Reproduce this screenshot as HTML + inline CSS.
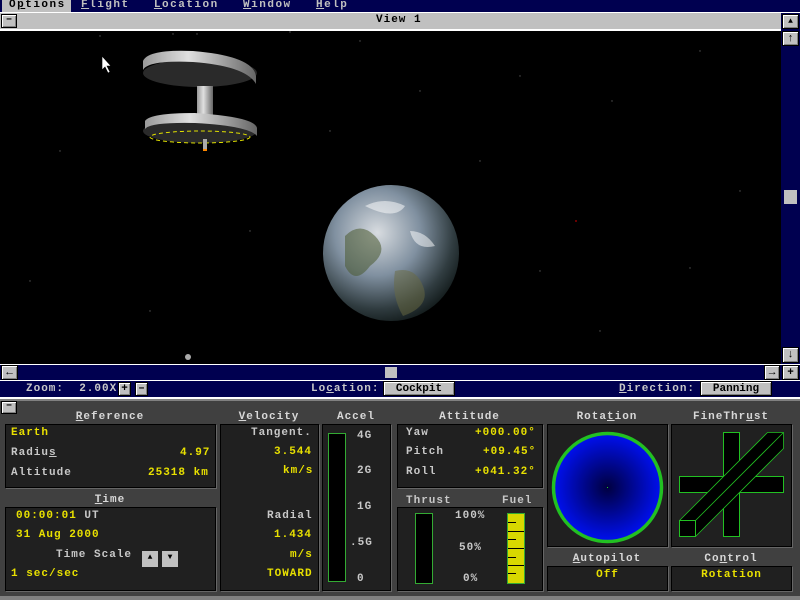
<!DOCTYPE html><html><head><style>
*{margin:0;padding:0;box-sizing:border-box}
body{width:800px;height:600px;overflow:hidden;background:#404040;font-family:"Liberation Mono",monospace;font-weight:bold;font-size:11px;position:relative}
.a{position:absolute}
.nv{background:#000050}
.btn{position:absolute;background:#c0c0c0;border:1px solid #000;box-shadow:inset 1px 1px #fff,inset -1px -1px #808080;color:#000;text-align:center;line-height:14px}
.box{position:absolute;background:#202020;border:1px solid #000;box-shadow:1px 1px #666}
.lbl{position:absolute;color:#d8d8d8;text-align:center;letter-spacing:1px}
.y{color:#e8e000}.g{color:#c8c8c8}
.t{position:absolute;letter-spacing:1px;white-space:nowrap}
u{text-decoration:underline}
</style></head><body>
<div class="a nv" style="left:0;top:0;width:800px;height:12px"></div>
<div class="a" style="left:2px;top:0;width:69px;height:12px;background:#c0c0c0"></div>
<div class="t" style="left:9px;top:-1px;color:#000;letter-spacing:1.5px">O<span style="text-decoration:underline">p</span>tions</div>
<div class="t" style="left:81px;top:-1px;color:#c0c0c0;letter-spacing:1.5px"><u>F</u>light&nbsp;&nbsp;&nbsp;<u>L</u>ocation&nbsp;&nbsp;&nbsp;<u>W</u>indow&nbsp;&nbsp;&nbsp;<u>H</u>elp</div>
<div class="a" style="left:0;top:12px;width:800px;height:1px;background:#fff"></div>
<div class="a" style="left:0;top:13px;width:781px;height:16px;background:#c0c0c0"></div>
<div class="btn" style="left:1px;top:14px;width:16px;height:14px;line-height:10px">&#8211;</div>
<div class="t" style="left:376px;top:14px;color:#000">View 1</div>
<div class="a nv" style="left:781px;top:13px;width:19px;height:352px"></div>
<div class="btn" style="left:782px;top:14px;width:17px;height:15px;font-size:8px">&#9650;</div>
<div class="a" style="left:0;top:29px;width:781px;height:2px;background:#fff"></div>
<div class="a" style="left:0;top:31px;width:781px;height:334px;background:#000;overflow:hidden">
<svg width="781" height="334">
<g fill="#555"><circle cx="100" cy="5" r=".7"/><circle cx="173" cy="3" r=".7"/><circle cx="197" cy="3" r=".7"/><circle cx="290" cy="1" r=".7"/><circle cx="360" cy="10" r=".7"/><circle cx="520" cy="45" r=".7"/><circle cx="612" cy="70" r=".7"/><circle cx="690" cy="237" r=".7"/><circle cx="700" cy="20" r=".7"/><circle cx="60" cy="120" r=".7"/><circle cx="30" cy="250" r=".7"/><circle cx="250" cy="200" r=".7"/><circle cx="480" cy="130" r=".7"/><circle cx="600" cy="300" r=".7"/><circle cx="740" cy="160" r=".7"/><circle cx="150" cy="280" r=".7"/><circle cx="540" cy="240" r=".7"/><circle cx="420" cy="60" r=".7"/><circle cx="330" cy="100" r=".7"/></g>
<circle cx="576" cy="190" r="1" fill="#800"/>
<defs><radialGradient id="e" cx="40%" cy="35%" r="70%"><stop offset="0" stop-color="#d8dce0"/><stop offset=".45" stop-color="#8090a0"/><stop offset=".8" stop-color="#303c40"/><stop offset="1" stop-color="#101818"/></radialGradient>
<linearGradient id="s" x1="0" x2="1"><stop offset="0" stop-color="#999"/><stop offset=".4" stop-color="#e0e0e0"/><stop offset="1" stop-color="#666"/></linearGradient></defs>
<circle cx="391" cy="222" r="68" fill="url(#e)"/>
<path d="M345 205q15-15 30 0t-5 30q-15 20-25 0z" fill="#4a5a30" opacity=".55"/>
<path d="M395 240q20-5 28 15t-20 30q-12-20-8-45z" fill="#6a6a40" opacity=".5"/>
<path d="M365 175q20-10 40 0q-10 15-40 0zM410 200q15 0 25 15q-20 5-25-15z" fill="#fff" opacity=".5"/>
<ellipse cx="200" cy="42" rx="57" ry="14" fill="#2a2a2a"/>
<path d="M143 30q5-12 50-10q60 5 63 25l0 8q-10-18-63-22q-45-2-50 8z" fill="url(#s)"/>
<rect x="197" y="55" width="16" height="40" fill="url(#s)"/>
<ellipse cx="200" cy="100" rx="57" ry="12" fill="#2a2a2a"/>
<path d="M145 90q5-8 50-8q60 4 62 15l0 8q-8-10-62-13q-45-1-50 6z" fill="url(#s)"/>
<ellipse cx="200" cy="106" rx="50" ry="6" fill="none" stroke="#e0e000" stroke-dasharray="4 3"/>
<rect x="203" y="108" width="4" height="10" fill="#aaa"/><rect x="203" y="118" width="4" height="2" fill="#f80"/>
<path d="M102 25l0 14l3-3l3 6l2-1l-3-6l4 0z" fill="#fff" stroke="#000" stroke-width=".6"/>
<circle cx="188" cy="326" r="3" fill="#aaa"/>
</svg></div>
<div class="btn" style="left:782px;top:31px;width:17px;height:15px">&#8593;</div>
<div class="a" style="left:784px;top:190px;width:13px;height:14px;background:#c0c0c0"></div>
<div class="btn" style="left:782px;top:347px;width:17px;height:16px">&#8595;</div>
<div class="a" style="left:0;top:364px;width:800px;height:1px;background:#fff"></div>
<div class="a nv" style="left:0;top:365px;width:800px;height:15px"></div>
<div class="btn" style="left:1px;top:365px;width:17px;height:15px">&#8592;</div>
<div class="a" style="left:385px;top:367px;width:12px;height:11px;background:#c0c0c0"></div>
<div class="btn" style="left:764px;top:365px;width:16px;height:15px">&#8594;</div>
<div class="btn" style="left:782px;top:365px;width:17px;height:15px">+</div>
<div class="a" style="left:0;top:380px;width:800px;height:1px;background:#fff"></div>
<div class="a nv" style="left:0;top:381px;width:800px;height:16px"></div>
<div class="t" style="left:26px;top:383px;color:#c8c8c8">Zoom:&nbsp;&nbsp;2.00X</div>
<div class="btn" style="left:118px;top:382px;width:13px;height:14px;line-height:12px">+</div>
<div class="btn" style="left:135px;top:382px;width:13px;height:14px;line-height:12px">&#8211;</div>
<div class="t" style="left:311px;top:383px;color:#c8c8c8">Lo<u>c</u>ation:</div>
<div class="btn" style="left:383px;top:381px;width:72px;height:15px">Cockpit</div>
<div class="t" style="left:619px;top:383px;color:#c8c8c8"><u>D</u>irection:</div>
<div class="btn" style="left:700px;top:381px;width:72px;height:15px">Panning</div>
<div class="a" style="left:0;top:397px;width:800px;height:2px;background:#fff"></div>
<div class="a" style="left:0;top:399px;width:800px;height:2px;background:#808080"></div>
<div class="btn" style="left:1px;top:401px;width:16px;height:13px;line-height:9px">&#8211;</div>
<div class="lbl" style="left:5px;top:411px;width:210px"><u>R</u>eference</div>
<div class="lbl" style="left:220px;top:411px;width:98px"><u>V</u>elocity</div>
<div class="lbl" style="left:322px;top:411px;width:68px">Accel</div>
<div class="lbl" style="left:397px;top:411px;width:145px">Attitude</div>
<div class="lbl" style="left:547px;top:411px;width:120px">Rota<u>t</u>ion</div>
<div class="lbl" style="left:671px;top:411px;width:120px">FineThr<u>u</u>st</div>
<div class="lbl" style="left:5px;top:494px;width:210px"><u>T</u>ime</div>
<div class="t g" style="left:406px;top:495px">Thrust</div><div class="t g" style="left:502px;top:495px">Fuel</div>
<div class="lbl" style="left:547px;top:553px;width:120px"><u>A</u>utopilot</div>
<div class="lbl" style="left:671px;top:553px;width:120px">Co<u>n</u>trol</div>
<div class="box" style="left:5px;top:424px;width:211px;height:64px"></div>
<div class="box" style="left:5px;top:507px;width:211px;height:84px"></div>
<div class="box" style="left:220px;top:424px;width:99px;height:167px"></div>
<div class="box" style="left:322px;top:424px;width:69px;height:167px"></div>
<div class="box" style="left:397px;top:424px;width:146px;height:64px"></div>
<div class="box" style="left:397px;top:507px;width:146px;height:84px"></div>
<div class="box" style="left:547px;top:424px;width:121px;height:123px"></div>
<div class="box" style="left:671px;top:424px;width:121px;height:123px"></div>
<div class="box" style="left:547px;top:566px;width:121px;height:25px"></div>
<div class="box" style="left:671px;top:566px;width:121px;height:25px"></div>
<div class="t y" style="left:11px;top:427px">Earth</div>
<div class="t g" style="left:11px;top:447px">Radiu<u>s</u></div><div class="t y" style="left:180px;top:447px">4.97</div>
<div class="t g" style="left:11px;top:467px">Altitude</div><div class="t y" style="left:148px;top:467px">25318 km</div>
<div class="t y" style="left:16px;top:510px">00:00:01 <span class="g">UT</span></div>
<div class="t y" style="left:16px;top:529px">31 Aug 2000</div>
<div class="t g" style="left:56px;top:549px">Time Scale</div>
<div class="btn" style="left:142px;top:551px;width:16px;height:16px;border:none;box-shadow:none;font-size:8px">&#9650;</div>
<div class="btn" style="left:162px;top:551px;width:16px;height:16px;border:none;box-shadow:none;font-size:8px">&#9660;</div>
<div class="t y" style="left:11px;top:568px">1 sec/sec</div>
<div class="t g" style="left:251px;top:427px">Tangent.</div>
<div class="t y" style="left:274px;top:446px">3.544</div>
<div class="t y" style="left:283px;top:465px">km/s</div>
<div class="t g" style="left:267px;top:510px">Radial</div>
<div class="t y" style="left:274px;top:529px">1.434</div>
<div class="t y" style="left:290px;top:549px">m/s</div>
<div class="t y" style="left:267px;top:568px">TOWARD</div>
<div class="a" style="left:328px;top:433px;width:18px;height:149px;background:#000;border:1px solid #3a3"></div>
<div class="t g" style="left:357px;top:430px">4G</div><div class="t g" style="left:357px;top:465px">2G</div><div class="t g" style="left:357px;top:501px">1G</div><div class="t g" style="left:350px;top:537px">.5G</div><div class="t g" style="left:357px;top:573px">0</div>
<div class="t g" style="left:406px;top:427px">Yaw</div><div class="t y" style="left:475px;top:427px">+000.00&deg;</div>
<div class="t g" style="left:406px;top:446px">Pitch</div><div class="t y" style="left:483px;top:446px">+09.45&deg;</div>
<div class="t g" style="left:406px;top:466px">Roll</div><div class="t y" style="left:475px;top:466px">+041.32&deg;</div>
<div class="a" style="left:415px;top:513px;width:18px;height:71px;background:#000;border:1px solid #3a3"></div>
<div class="t g" style="left:455px;top:510px">100%</div><div class="t g" style="left:459px;top:542px">50%</div><div class="t g" style="left:463px;top:573px">0%</div>
<div class="a" style="left:507px;top:513px;width:18px;height:71px;background:#d8d800;border:1px solid #3a3"></div>
<svg class="a" style="left:507px;top:513px" width="18" height="71"><g stroke="#000"><path d="M1 9.5h8M1 18.5h16M1 26.5h8M1 35.5h16M1 44.5h8M1 52.5h16M1 60.5h8"/></g></svg>
<svg class="a" style="left:547px;top:424px" width="121" height="123"><defs><radialGradient id="r"><stop offset="0" stop-color="#000040"/><stop offset="1" stop-color="#0010f0"/></radialGradient></defs><circle cx="60.5" cy="63.5" r="54" fill="url(#r)" stroke="#22c022" stroke-width="3.5"/><rect x="60" y="63" width="1" height="1" fill="#2c2"/></svg>
<svg class="a" style="left:671px;top:424px" width="121" height="123" fill="#000" stroke="#22c022"><path d="M8.5 52.5h104v16h-104z"/><path d="M52.5 8.5h16v104h-16z"/><path d="M8.5 96.5l88-88h16v16l-88 88h-16z" stroke-width=".8"/><path d="M24.5 96.5l88-88" stroke-width=".8"/><rect x="8.5" y="96.5" width="16" height="16"/></svg>
<div class="t y" style="left:547px;top:569px;width:121px;text-align:center">Off</div>
<div class="t y" style="left:671px;top:569px;width:121px;text-align:center">Rotation</div>
<div class="a" style="left:0;top:596px;width:800px;height:4px;background:#808080"></div>
</body></html>
